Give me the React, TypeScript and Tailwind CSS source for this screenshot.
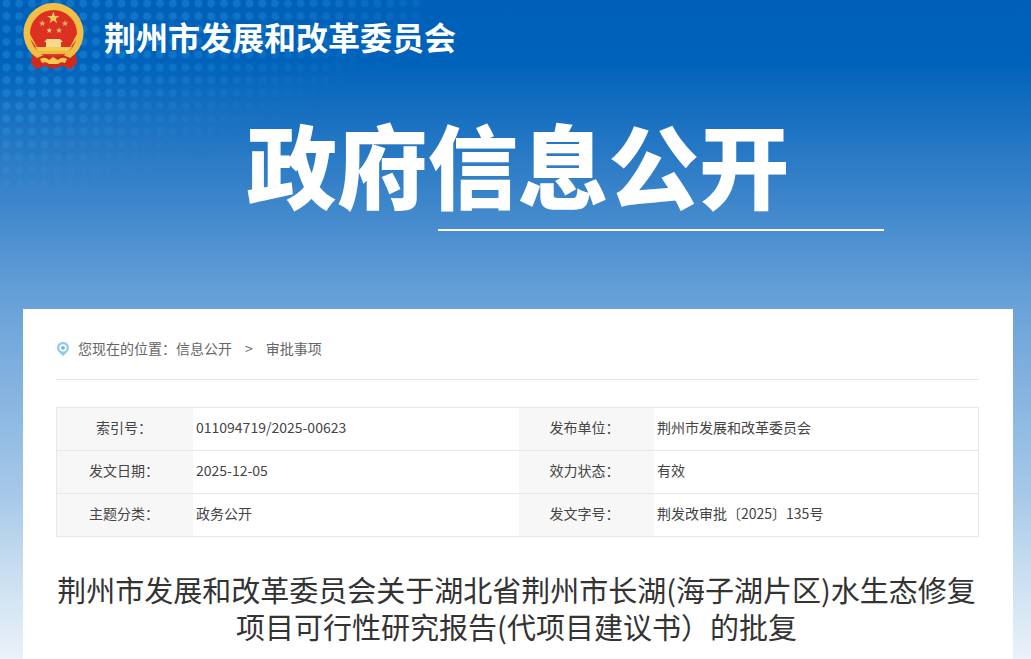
const rows = [
  ["索引号：", "011094719/2025-00623", "发布单位：", "荆州市发展和改革委员会"],
  ["发文日期：", "2025-12-05", "效力状态：", "有效"],
  ["主题分类：", "政务公开", "发文字号：", "荆发改审批〔2025〕135号"],
];

function Star({ cx, cy, r, fill }: { cx: number; cy: number; r: number; fill: string }) {
  const pts = [];
  for (let i = 0; i < 10; i++) {
    const rad = i % 2 === 0 ? r : r * 0.4;
    const a = -Math.PI / 2 + (i * Math.PI) / 5;
    pts.push(`${(cx + rad * Math.cos(a)).toFixed(2)},${(cy + rad * Math.sin(a)).toFixed(2)}`);
  }
  return <polygon points={pts.join(" ")} fill={fill} />;
}

function Emblem() {
  return (
    <svg width="62" height="68" viewBox="0 0 62 68" className="shrink-0">
      {/* ribbon */}
      <path d="M10 46 L8 60 L13 66 L22 63 L30 66 L39 63 L48 66 L54 60 L52 46 Z" fill="#cf2a1e" />
      {/* ring */}
      <path d="M14 55 A30 30 0 1 1 47 55 L40 52 H21 Z" fill="#f0bf45" />
      <circle cx="30.500" cy="30.500" r="23.500" fill="#dc3122" />
      <path d="M7 31 A30 30 0 0 0 7.500 36 L13 44 H48 L54 36 L54 31 L47 44 H14 Z" fill="#f0bf45" />
      <Star cx={30.300} cy={15} r={6.500} fill="#f4c95a" />
      <Star cx={19.300} cy={20.500} r={3.400} fill="#efb95c" />
      <Star cx={42} cy={20.500} r={3.400} fill="#efb95c" />
      <Star cx={26.300} cy={27.500} r={3.200} fill="#efc07a" />
      <Star cx={36} cy={27.500} r={3.200} fill="#efc07a" />
      {/* gate */}
      <path d="M24 36 H37 L40 39 H38 V44 H23 V39 H21 Z" fill="#f5d98c" />
      <path d="M12 44 H49 L46 48 H15 Z" fill="#f6c94f" />
      <path d="M19 48 H42 V52 H19 Z" fill="#d9442a" />
      <path d="M15 48 H46 L44 51 H17 Z" fill="#efb93d" />
      {/* bow */}
      <path d="M17 56 Q22 53 26 57 L30 54 L35 57 Q39 53 44 56 L42 60 Q38 58 35 61 H26 Q23 58 19 60 Z" fill="#f6c94f" />
    </svg>
  );
}

function Pin() {
  return (
    <svg width="14" height="16" viewBox="0 0 14 16" className="shrink-0">
      <path d="M7 1 C3.500 1 1 3.600 1 6.800 C1 10 4.500 13 7 15 C9.500 13 13 10 13 6.800 C13 3.600 10.500 1 7 1 Z" fill="#8fcdec" />
      <circle cx="7" cy="6.800" r="3.600" fill="#ffffff" />
      <circle cx="7" cy="6.800" r="1.900" fill="#6bb5de" />
    </svg>
  );
}

export default function App() {
  return (
    <div className="relative h-screen overflow-hidden font-['Noto_Sans_CJK_SC','Liberation_Sans',sans-serif] bg-[linear-gradient(to_bottom,#0060b9_0px,#0062ba_60px,#2d7cc6_165px,#6ba3d9_309px,#a8cae9_500px,#c4dbef_560px,#eaf2fa_659px)]">
      {/* dots in the banner corner */}
      <div className="absolute left-0 top-0 h-[190px] w-[420px] bg-[radial-gradient(circle,rgba(50,170,230,0.3)_3.5px,transparent_4.5px)] bg-[length:12.8px_12.8px] bg-[position:0_-3px] [mask-image:linear-gradient(to_bottom_right,black_30%,transparent_66%)]" />

      <div className="relative">
        <div className="flex h-[73px] items-start pl-[23px] pt-[3px]">
          <Emblem />
          <h2 className="ml-[19px] mt-[13px] text-[32px] leading-[40px] font-bold text-white">
            荆州市发展和改革委员会
          </h2>
        </div>

        <div className="flex h-[236px] flex-col">
          <h1 className="mt-[32px] pl-[5px] text-center text-[90.5px] leading-[116px] font-black text-white">政府信息公开</h1>
          <div className="ml-[438px] mt-[8px] h-[2px] w-[446px] bg-white" />
        </div>

        <div className="ml-[23px] mr-[18px] h-[350px] bg-white pl-[33px] pr-[34px]">
          <div className="flex h-[71px] items-center gap-[8px] border-b border-[#e8e8e8] pt-[9px] text-[14px] text-[#666666]">
            <Pin />
            <span>您现在的位置：信息公开</span>
            <span className="mx-[5px]">&gt;</span>
            <span>审批事项</span>
          </div>

          <div className="mt-[27px] grid grid-cols-[136px_326px_135px_1fr] border-t border-l border-[#e8e8e8] text-[14px] text-[#444444]">
            {rows.map((row) => (
              <div key={row[0]} className="contents">
                <div className="flex h-[43px] items-center justify-center border-b border-[#e8e8e8] bg-[#f7f7f7] pb-[3px] pr-[2px]">{row[0]}</div>
                <div className="flex h-[43px] items-center border-b border-[#e8e8e8] pb-[3px] pl-[3px]">{row[1]}</div>
                <div className="flex h-[43px] items-center justify-center border-b border-[#e8e8e8] bg-[#f7f7f7] pb-[3px] pr-[4px]">{row[2]}</div>
                <div className="flex h-[43px] items-center border-b border-r border-[#e8e8e8] pb-[3px] pl-[3px]">{row[3]}</div>
              </div>
            ))}
          </div>

          <h3 className="mt-[34px] pr-[2px] text-center text-[29px] leading-[37px] font-normal text-[#333333]">
            荆州市发展和改革委员会关于湖北省荆州市长湖(海子湖片区)水生态修复
            <br />
            项目可行性研究报告(代项目建议书）的批复
          </h3>
        </div>
      </div>
    </div>
  );
}
